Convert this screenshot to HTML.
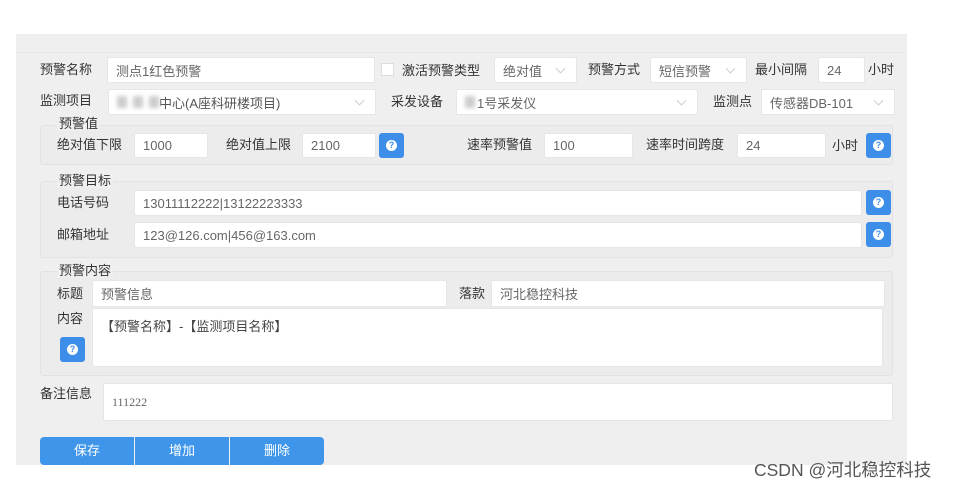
<!DOCTYPE html>
<html><head><meta charset="utf-8"><style>
*{box-sizing:border-box;margin:0;padding:0}
body{width:960px;height:486px;background:#fff;position:relative;overflow:hidden;font-family:"Liberation Sans","Noto Sans CJK SC",sans-serif;font-size:13px;color:#333}
.panel{position:absolute;left:16px;top:34px;width:891px;height:431px;background:#efefef}
.a{position:absolute}
.l{position:absolute;font-size:13px;color:#333;line-height:16px}
.i{position:absolute;background:#fff;border:1px solid #e6e6e6;border-radius:2px;color:#666;font-size:13px;padding-left:8px;display:flex;align-items:center}
.sel::after{content:"";position:absolute;right:12px;top:50%;width:6px;height:6px;border-right:1px solid #ccc;border-bottom:1px solid #ccc;transform:translateY(-70%) rotate(45deg)}
.fs{position:absolute;border:1px solid #e2e2e2;border-radius:3px;background:#ececec}
.lg{position:absolute;background:#efefef;padding:0 2px;font-size:13px;color:#333;line-height:14px}
.b{position:absolute;width:25px;height:25px;background:#3d8ee8;border-radius:3px}
.b::after{content:"?";position:absolute;left:7px;top:7px;width:11px;height:11px;border-radius:50%;background:#fff;color:#3d8ee8;font-size:9px;font-weight:bold;line-height:11px;text-align:center}
.btn{position:absolute;top:437px;height:28px;width:94px;background:#3e95ea;color:#fff;text-align:center;line-height:28px;font-size:13px}
.blur{display:inline-block;width:10px;height:12px;background:#ccc;filter:blur(2px);margin-right:6px}
</style></head><body>
<div class="panel"></div>
<div class="a" style="left:16px;top:52px;width:891px;height:1px;background:#e8e8e8"></div>

<div class="l" style="left:40px;top:62px">预警名称</div>
<div class="i" style="left:107px;top:57px;width:268px;height:26px">测点1红色预警</div>
<div class="a" style="left:381px;top:63px;width:13px;height:13px;background:#fff;border:1px solid #ddd"></div>
<div class="l" style="left:402px;top:63px">激活预警类型</div>
<div class="i sel" style="left:494px;top:57px;width:83px;height:26px">绝对值</div>
<div class="l" style="left:588px;top:62px">预警方式</div>
<div class="i sel" style="left:650px;top:57px;width:97px;height:26px">短信预警</div>
<div class="l" style="left:755px;top:62px">最小间隔</div>
<div class="i" style="left:818px;top:57px;width:47px;height:26px">24</div>
<div class="l" style="left:868px;top:62px">小时</div>

<div class="l" style="left:40px;top:93px">监测项目</div>
<div class="i sel" style="left:108px;top:89px;width:268px;height:26px;color:#555"><span class="blur"></span><span class="blur"></span><span class="blur" style="margin-right:0"></span>中心(A座科研楼项目)</div>
<div class="l" style="left:391px;top:94px">采发设备</div>
<div class="i sel" style="left:456px;top:89px;width:242px;height:26px"><span class="blur" style="margin-right:2px"></span>1号采发仪</div>
<div class="l" style="left:713px;top:94px">监测点</div>
<div class="i sel" style="left:761px;top:89px;width:134px;height:26px">传感器DB-101</div>

<div class="fs" style="left:40px;top:125px;width:853px;height:40px"></div>
<div class="lg" style="left:57px;top:117px">预警值</div>
<div class="l" style="left:57px;top:137px">绝对值下限</div>
<div class="i" style="left:134px;top:133px;width:74px;height:25px">1000</div>
<div class="l" style="left:226px;top:137px">绝对值上限</div>
<div class="i" style="left:302px;top:133px;width:74px;height:25px">2100</div>
<div class="b" style="left:379px;top:133px"></div>
<div class="l" style="left:467px;top:137px">速率预警值</div>
<div class="i" style="left:544px;top:133px;width:89px;height:25px">100</div>
<div class="l" style="left:646px;top:137px">速率时间跨度</div>
<div class="i" style="left:737px;top:133px;width:89px;height:25px">24</div>
<div class="l" style="left:832px;top:138px">小时</div>
<div class="b" style="left:866px;top:133px"></div>

<div class="fs" style="left:40px;top:181px;width:853px;height:77px"></div>
<div class="lg" style="left:57px;top:174px">预警目标</div>
<div class="l" style="left:57px;top:195px">电话号码</div>
<div class="i" style="left:134px;top:190px;width:728px;height:26px">13011112222|13122223333</div>
<div class="b" style="left:866px;top:190px"></div>
<div class="l" style="left:57px;top:227px">邮箱地址</div>
<div class="i" style="left:134px;top:222px;width:728px;height:26px">123@126.com|456@163.com</div>
<div class="b" style="left:866px;top:222px"></div>

<div class="fs" style="left:40px;top:271px;width:853px;height:105px"></div>
<div class="lg" style="left:57px;top:264px">预警内容</div>
<div class="l" style="left:57px;top:286px">标题</div>
<div class="i" style="left:92px;top:280px;width:355px;height:27px">预警信息</div>
<div class="l" style="left:459px;top:286px">落款</div>
<div class="i" style="left:491px;top:280px;width:394px;height:27px">河北稳控科技</div>
<div class="l" style="left:57px;top:311px">内容</div>
<div class="i" style="left:92px;top:308px;width:791px;height:59px;align-items:flex-start;padding-top:7px;color:#444">【预警名称】-【监测项目名称】</div>
<div class="b" style="left:60px;top:337px"></div>

<div class="l" style="left:40px;top:386px">备注信息</div>
<div class="i" style="left:103px;top:383px;width:790px;height:38px;font-family:'Liberation Serif',serif;font-size:12px">111222</div>

<div class="btn" style="left:40px;border-radius:4px 0 0 4px">保存</div>
<div class="btn" style="left:135px">增加</div>
<div class="btn" style="left:230px;border-radius:0 4px 4px 0">删除</div>

<div class="a" style="left:754px;top:457px;font-size:17.5px;color:#555">CSDN @河北稳控科技</div>
</body></html>
